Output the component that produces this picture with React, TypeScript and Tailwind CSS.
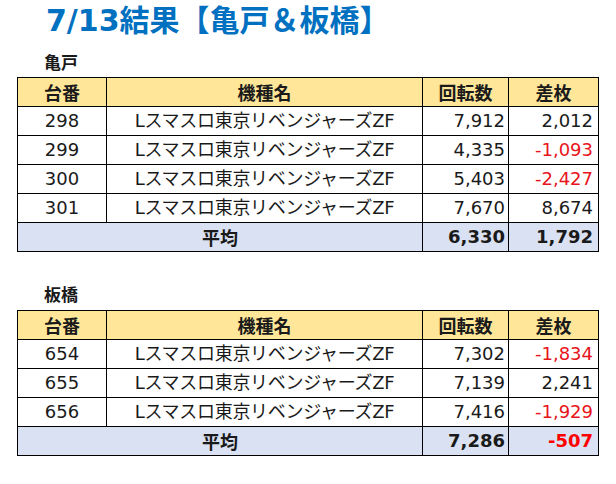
import React from "react";

type Row = { no: string; name: string; spins: string; diff: string; neg: boolean };

const kameido: Row[] = [
  { no: "298", name: "Lスマスロ東京リベンジャーズZF", spins: "7,912", diff: "2,012", neg: false },
  { no: "299", name: "Lスマスロ東京リベンジャーズZF", spins: "4,335", diff: "-1,093", neg: true },
  { no: "300", name: "Lスマスロ東京リベンジャーズZF", spins: "5,403", diff: "-2,427", neg: true },
  { no: "301", name: "Lスマスロ東京リベンジャーズZF", spins: "7,670", diff: "8,674", neg: false },
];

const itabashi: Row[] = [
  { no: "654", name: "Lスマスロ東京リベンジャーズZF", spins: "7,302", diff: "-1,834", neg: true },
  { no: "655", name: "Lスマスロ東京リベンジャーズZF", spins: "7,139", diff: "2,241", neg: false },
  { no: "656", name: "Lスマスロ東京リベンジャーズZF", spins: "7,416", diff: "-1,929", neg: true },
];

const FONT = { fontFamily: '"DejaVu Sans", "Noto Sans CJK JP", sans-serif' };
const JP = { fontFamily: '"Noto Sans CJK JP", sans-serif' };

function ResultTable({ rows, avgSpins, avgDiff, avgNeg }: { rows: Row[]; avgSpins: string; avgDiff: string; avgNeg: boolean }) {
  const cell = "border border-black p-0";
  return (
    <table className="ml-[17px] w-[581px] table-fixed border-collapse text-[#1a1a1a]" style={FONT}>
      <colgroup>
        <col className="w-[89px]" />
        <col className="w-[316px]" />
        <col className="w-[86px]" />
        <col className="w-[90px]" />
      </colgroup>
      <thead>
        <tr className="h-[29px] bg-[#FFE699] text-[18px] font-bold" style={JP}>
          <th className={`${cell} text-center font-bold`}>台番</th>
          <th className={`${cell} text-center font-bold`}>機種名</th>
          <th className={`${cell} text-center font-bold`}>回転数</th>
          <th className={`${cell} text-center font-bold`}>差枚</th>
        </tr>
      </thead>
      <tbody className="text-[18px] leading-none">
        {rows.map((r) => (
          <tr key={r.no} className="h-[29px]">
            <td className={`${cell} text-center`}>{r.no}</td>
            <td className={`${cell} text-center tracking-[-0.3px]`}>{r.name}</td>
            <td className={`${cell} pr-[3px] text-right`}>{r.spins}</td>
            <td className={`${cell} pr-[5px] text-right ${r.neg ? "text-[#E8141B]" : ""}`}>{r.diff}</td>
          </tr>
        ))}
        <tr className="h-[29px] bg-[#D9E1F2] font-bold">
          <td colSpan={2} className={`${cell} text-center text-[18px]`} style={JP}>
            平均
          </td>
          <td className={`${cell} pr-[3px] text-right`}>{avgSpins}</td>
          <td className={`${cell} pr-[5px] text-right ${avgNeg ? "text-[#FF0000]" : ""}`}>{avgDiff}</td>
        </tr>
      </tbody>
    </table>
  );
}

export default function App() {
  return (
    <div className="h-[484px] w-[616px] overflow-hidden bg-white">
      <div className="pl-[46px] text-[30px] font-bold leading-[42px] text-[#0070C0]" style={FONT}>
        7/13結果【亀戸＆板橋】
      </div>
      <div className="mt-[10px] pl-[44px] text-[17px] font-bold leading-[20px] text-[#1a1a1a]" style={JP}>
        亀戸
      </div>
      <div className="mt-[5px]">
        <ResultTable rows={kameido} avgSpins="6,330" avgDiff="1,792" avgNeg={false} />
      </div>
      <div className="mt-[32px] pl-[44px] text-[17px] font-bold leading-[20px] text-[#1a1a1a]" style={JP}>
        板橋
      </div>
      <div className="mt-[6px]">
        <ResultTable rows={itabashi} avgSpins="7,286" avgDiff="-507" avgNeg={true} />
      </div>
    </div>
  );
}
